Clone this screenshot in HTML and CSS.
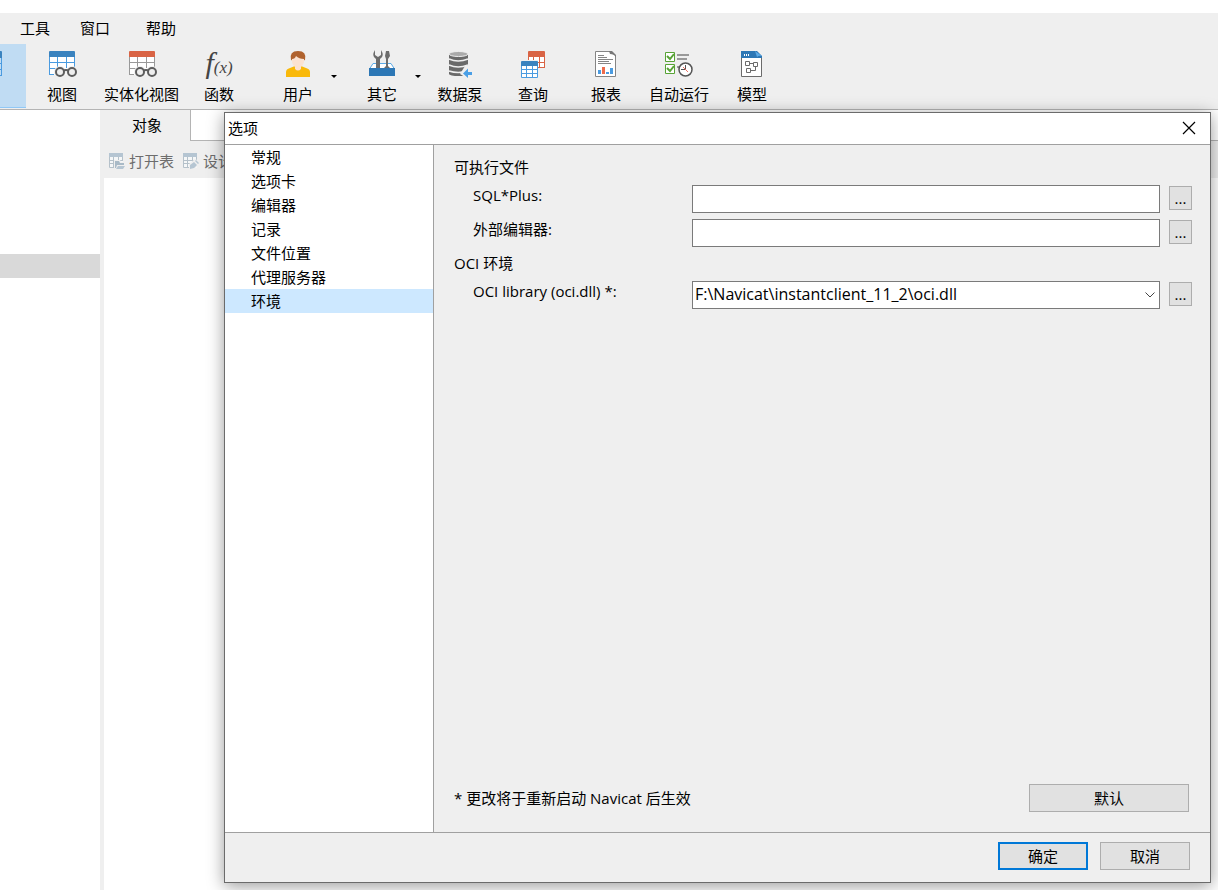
FILE: index.html
```
<!DOCTYPE html>
<html lang="zh-CN">
<head>
<meta charset="utf-8">
<title>选项</title>
<link rel="stylesheet" href="styles.css">
</head>
<body>
<div class="app">
  <nav class="menubar">
    <button class="menu">工具</button>
    <button class="menu">窗口</button>
    <button class="menu menu-help">帮助</button>
  </nav>

  <div class="toolbar">
    <button class="tool tool-active" aria-label="表">
      <svg class="edge-icon" width="2" height="26" viewBox="0 0 2 26"><path fill="#3a83bf" d="M0 0h1q1 0 1 1v6H0z"/><path fill="#4a9be0" d="M1 7h1v18H1zM0 12h1v1H0zM0 18h1v1H0zM0 24h2v1H0z"/></svg>
    </button>
    <button class="tool">
      <svg class="icon" width="28" height="28" viewBox="0 0 28 28"><path fill="#fff" d="M1 7h26v18H1z"/><path fill="none" stroke="#4a9be0" d="M1.500 7v18M1 12.500h26M1 18.500h10M1 24.500h5M9.500 7v12M18.500 7v11M26.500 7v10"/><path fill="#3a83bf" d="M1 7V2q0-1 1-1h24q1 0 1 1v5z"/><g fill="#fff" stroke="#efefef" stroke-width="4"><circle cx="12" cy="22" r="4"/><circle cx="24" cy="22" r="4"/></g><g fill="#efefef" stroke="#5d5d5d" stroke-width="2"><path d="M15 21q3-2 6 0"/><circle cx="12" cy="22" r="4"/><circle cx="24" cy="22" r="4"/></g></svg>
      <span>视图</span>
    </button>
    <button class="tool tool-wide">
      <svg class="icon" width="28" height="28" viewBox="0 0 28 28"><path fill="#fff" d="M1 7h26v18H1z"/><path fill="none" stroke="#999" d="M1.500 7v18M1 12.500h26M1 18.500h10M1 24.500h5M9.500 7v12M18.500 7v11M26.500 7v10"/><path fill="#d96445" d="M1 7V2q0-1 1-1h24q1 0 1 1v5z"/><g fill="#fff" stroke="#efefef" stroke-width="4"><circle cx="12" cy="22" r="4"/><circle cx="24" cy="22" r="4"/></g><g fill="#efefef" stroke="#5d5d5d" stroke-width="2"><path d="M15 21q3-2 6 0"/><circle cx="12" cy="22" r="4"/><circle cx="24" cy="22" r="4"/></g></svg>
      <span>实体化视图</span>
    </button>
    <button class="tool tool-fn">
      <span class="icon fx" aria-hidden="true"><i class="fx-f">f</i><i class="fx-x">(x)</i></span>
      <span>函数</span>
    </button>
    <div class="split split-first">
      <button class="tool tool-split">
        <svg class="icon" width="28" height="28" viewBox="0 0 28 28"><path fill="#f9b90a" d="M2 27v-5q0-3 4-4l5-2h6l5 2q4 1 4 4v5z"/><path fill="#fbe2d2" d="M8 7q0-5 6-5t6 5q1 7-3 10v2q-3 3-6 0v-2q-4-3-3-10z"/><path fill="#b0622e" d="M7 10Q5 1 14 1t7 9q-1 1-1-1-5 0-8-3-1 3-4 3 0 2-1 1z"/></svg>
        <span>用户</span>
      </button>
      <button class="arrow" aria-label="用户菜单"><svg width="6" height="3" viewBox="0 0 6 3"><path d="M0 0h6L3 3z"/></svg></button>
    </div>
    <div class="split">
      <button class="tool tool-split">
        <svg class="icon" width="28" height="28" viewBox="0 0 28 28"><path fill="#fff" stroke="#5caae6" d="M1.500 19l3.500-5.500h18l3.500 5.500z"/><path fill="#6b6b6b" d="M7 0Q3 6 8 9v10h4V9q5-3 1-9v5l-3 2-3-2zM18 1h3l1 5-2 3v7l2 2v1h-6v-1l2-2V9l-1-3z"/><path fill="#2d77b5" d="M1 18h26v8H1z"/></svg>
        <span>其它</span>
      </button>
      <button class="arrow" aria-label="其它菜单"><svg width="6" height="3" viewBox="0 0 6 3"><path d="M0 0h6L3 3z"/></svg></button>
    </div>
    <button class="tool">
      <svg class="icon" width="28" height="28" viewBox="0 0 28 28"><path fill="#6a6a6a" d="M3 3h19v19q-8 3-19 2z"/><ellipse cx="12.500" cy="24" rx="9.500" ry="2" fill="#6a6a6a"/><ellipse cx="12.500" cy="4" rx="9.500" ry="2.500" fill="#aaa" stroke="#efefef"/><g fill="none" stroke="#efefef"><path d="M3 9q9 4 19 0M3 15q9 4 19 0M3 21q9 3 19 0" stroke-width="1.500"/></g><path fill="#efefef" d="M14 24l5-8h9v11h-9z"/><path fill="#4a9fe6" d="M17 23.500l5-5V22h4v3h-4v3z"/></svg>
      <span>数据泵</span>
    </button>
    <button class="tool tool-mid">
      <svg class="icon" width="28" height="28" viewBox="0 0 28 28"><path fill="#fff" d="M9 5h17v13H9z"/><path fill="none" stroke="#d96445" d="M9.500 5v13M25.500 5v13M9 12.500h17M9 17.500h17M14.500 6v12M20.500 6v12"/><path fill="#d96445" d="M9 7V2q0-1 1-1h15q1 0 1 1v5z"/><path fill="#efefef" d="M1 10h18v18H1z"/><path fill="#fff" d="M2 15h17v13H2z"/><path fill="none" stroke="#4a9be0" d="M2.500 15v12.500h16V15M2 19.500h17M2 23.500h17M7.500 15v13M13.500 15v13"/><path fill="#3a83bf" d="M2 16v-4q0-1 1-1h15q1 0 1 1v4z"/></svg>
      <span>查询</span>
    </button>
    <button class="tool">
      <svg class="icon" width="28" height="28" viewBox="0 0 28 28"><path fill="#fff" stroke="#858585" d="M3.500 1.500h15l5 4v21h-20z"/><path fill="#777" d="M17 1h3l4 4v2q-2-3-6-3z"/><path fill="none" stroke="#858585" d="M6 5.500h6M6 7.500h9M6 9.500h15M6 11.500h11M6 13.500h13"/><path fill="#4a9be0" d="M6 20h3v4H6zM14 22h3v2h-3zM18 18h3v6h-3z"/><path fill="#ed6b4c" d="M10 17h3v7h-3z"/></svg>
      <span>报表</span>
    </button>
    <button class="tool tool-mid">
      <svg class="icon" width="28" height="28" viewBox="0 0 28 28"><g fill="#fff" stroke="#58a336"><path d="M.5 2.500h9v9h-9zM.5 14.500h9v9h-9z"/></g><path fill="none" stroke="#58a336" stroke-width="2" d="M2 6l3 3 4-5M2 18l3 3 4-5"/><path fill="#999" d="M12 4h12v2H12zM12 8h10v2H12zM12 16h3v2h-3z"/><circle cx="20.500" cy="19.500" r="6.500" fill="#fff" stroke="#555" stroke-width="1.500"/><path fill="none" stroke="#555" d="M20.500 15v4.500H16"/><path stroke="#ee7164" d="M18 17l5 5"/></svg>
      <span>自动运行</span>
    </button>
    <button class="tool">
      <svg class="icon" width="28" height="28" viewBox="0 0 28 28"><path fill="#fff" stroke="#6b6b6b" d="M3.500 7v19.500h20V7"/><path fill="#2d77b5" d="M3 1h16l5 5v2H3z"/><path fill="#5caae6" d="M17 1l7 5q-3-1-5 1z"/><path fill="#fff" d="M6 4h1v2H6zM8 4h1v2H8zM10 4h1v2h-1z"/><path fill="none" stroke="#6b6b6b" d="M7.500 11.500h4v4h-4zM8.500 18.500h4v4h-4zM15.500 12.500h4v4h-4zM12 13.500h3M17.500 17v3.500h-5"/></svg>
      <span>模型</span>
    </button>
  </div>

  <div class="workspace">
    <aside class="tree"><div class="tree-selected"></div></aside>
    <main class="content">
      <div class="tabs"><button class="tab">对象</button></div>
      <div class="actions">
        <button class="action"><svg width="16" height="16" viewBox="0 0 16 16"><path fill="#f5f7f8" d="M0 4h14v11H0z"/><path fill="none" stroke="#b5c1ca" d="M.5 4v10.500H6M0 7.500h14M0 10.500h6M4.500 4v11M9.500 4v4M13.500 4v4"/><path fill="#b5c5d2" d="M0 0h14v4H0z"/><path fill="#efefef" d="M5 7h6l1 2h4v7H5z"/><path fill="#a9bac7" d="M6 8h4l1 2h4v2H8l-1 3H6z"/><path fill="#b5c5d2" d="M9 13h7l-2 3H7z"/></svg>打开表</button>
        <button class="action"><svg width="16" height="16" viewBox="0 0 16 16"><path fill="#f5f7f8" d="M0 4h14v11H0z"/><path fill="none" stroke="#b5c1ca" d="M.5 4v10.500H7M0 7.500h14M0 10.500h8M4.500 4v11M9.500 4v6M13.500 4v4"/><path fill="#b5c5d2" d="M0 0h14v4H0z"/><path fill="#efefef" d="M6 16v-5l6-5 4 2v4l-5 4z"/><path fill="#b5c5d2" d="M7 16v-4l4-3 3 3-3 3zM12 8l1-1 3 3-1 1z"/></svg>设计表</button>
      </div>
    </main>
  </div>

  <section class="dialog" role="dialog" aria-labelledby="dialog-title">
    <header class="titlebar">
      <h1 class="title" id="dialog-title">选项</h1>
      <button class="close" aria-label="关闭"><svg width="12" height="12" viewBox="0 0 12 12"><path stroke="#000" stroke-width="1.200" d="M0 0l12 12M12 0L0 12"/></svg></button>
    </header>
    <div class="dialog-body">
      <nav class="sections">
        <button class="section">常规</button>
        <button class="section">选项卡</button>
        <button class="section">编辑器</button>
        <button class="section">记录</button>
        <button class="section">文件位置</button>
        <button class="section">代理服务器</button>
        <button class="section section-current" aria-current="page">环境</button>
      </nav>
      <div class="panel">
        <div class="group">
          <h2 class="group-title">可执行文件</h2>
          <div class="row">
            <label class="label" for="sqlplus">SQL*Plus:</label>
            <input class="field" id="sqlplus" type="text">
            <button class="browse" aria-label="浏览 SQL*Plus">...</button>
          </div>
          <div class="row">
            <label class="label" for="editor">外部编辑器:</label>
            <input class="field" id="editor" type="text">
            <button class="browse" aria-label="浏览外部编辑器">...</button>
          </div>
        </div>
        <div class="group">
          <h2 class="group-title">OCI 环境</h2>
          <div class="row">
            <label class="label" for="oci">OCI library (oci.dll) *:</label>
            <div class="combo">
              <select class="field" id="oci"><option>F:\Navicat\instantclient_11_2\oci.dll</option></select>
              <svg class="chevron" width="10" height="6" viewBox="0 0 10 6"><path fill="none" stroke="#444" d="M.5 .5L5 5 9.500 .5"/></svg>
            </div>
            <button class="browse" aria-label="浏览 OCI library">...</button>
          </div>
        </div>
        <div class="note">
          <span>* 更改将于重新启动 Navicat 后生效</span>
          <button class="btn btn-wide">默认</button>
        </div>
      </div>
    </div>
    <footer class="footer">
      <button class="btn btn-primary">确定</button>
      <button class="btn">取消</button>
    </footer>
  </section>
</div>
</body>
</html>
```
FILE: styles.css
```
* { box-sizing: border-box; }

body {
  margin: 0;
  background: #fff;
  color: #000;
  font: 15px/20px "Open Sans", "Noto Sans CJK SC", sans-serif;
}

button, input, select { font: inherit; color: inherit; }

button {
  margin: 0;
  padding: 0;
  border: 0;
  background: none;
}

svg { display: block; flex: none; overflow: visible; }

.app {
  position: relative;
  display: flex;
  flex-direction: column;
  min-height: 100vh;
  padding-top: 13px;
}

.menubar {
  display: flex;
  gap: 30px;
  height: 31px;
  padding: 0 20px 2px;
  background: #efefef;
}

.menu-help { margin-left: 6px; }

.toolbar {
  display: flex;
  height: 66px;
  border-bottom: 1px solid #b4b4b4;
  background: #efefef;
}

.tool {
  display: flex;
  flex-direction: column;
  align-items: center;
  gap: 6px;
  width: 72px;
  height: 64px;
  padding-top: 6px;
  white-space: nowrap;
}

.tool-active {
  align-items: flex-start;
  width: 26px;
  border-bottom: 1px solid #90c8f6;
  background: #c0dcf3;
}

.edge-icon { margin-top: 1px; }
.tool-wide { width: 87px; }
.tool-mid { width: 74px; }
.tool-fn { width: 68px; }
.tool-split { width: 60px; }
.icon { height: 28px; }

.fx {
  display: flex;
  align-items: baseline;
  color: #444;
  font-family: "Liberation Serif", serif;
  line-height: 26px;
}

.fx-f { font-size: 30px; }
.fx-x { font-size: 17px; }

.split { display: flex; margin-left: 12px; }
.split-first { margin-left: 15px; }

.arrow {
  display: flex;
  align-items: center;
  justify-content: center;
  width: 12px;
  height: 64px;
}

.workspace {
  display: flex;
  flex: 1;
  background: #efefef;
  gap: 4px;
}

.tree {
  width: 100px;
  padding-top: 144px;
  background: #fff;
}

.tree-selected { height: 24px; background: #d9d9d9; }

.content { flex: 1; background: #fff; }

.tabs {
  display: flex;
  height: 31px;
  background: linear-gradient(#b4b4b4, #b4b4b4) bottom / 100% 1px no-repeat;
}

.tab {
  width: 87px;
  padding-bottom: 2px;
  border-right: 1px solid #b4b4b4;
  background: #efefef;
}

.actions {
  display: flex;
  gap: 9px;
  height: 37px;
  padding: 2px 0 0 5px;
  background: #efefef;
}

.action {
  display: flex;
  align-items: center;
  gap: 4px;
  color: #6d6d6d;
}

.dialog {
  position: absolute;
  inset: 112px 7px 7px 224px;
  display: flex;
  flex-direction: column;
  border: 1px solid #6b6b6b;
  background: #efefef;
  box-shadow: 0 3px 16px rgba(0, 0, 0, .4);
}

.titlebar {
  display: flex;
  align-items: center;
  justify-content: space-between;
  height: 32px;
  padding: 0 15px 2px 3px;
  border-bottom: 1px solid #a0a0a0;
  background: #fff;
}

.title, .group-title { margin: 0; font: inherit; }

.dialog-body { display: flex; flex: 1; }

.sections {
  display: flex;
  flex-direction: column;
  width: 209px;
  border-right: 1px solid #a0a0a0;
  background: #fff;
}

.section {
  height: 24px;
  padding-left: 26px;
  text-align: left;
}

.section-current { background: #cde8ff; }

.panel {
  display: flex;
  flex: 1;
  flex-direction: column;
  gap: 6px;
  padding: 12px 18px 20px 20px;
}

.group { display: flex; flex-direction: column; gap: 6px; }
.group-title { margin-bottom: 2px; }

.row {
  display: flex;
  align-items: flex-start;
  gap: 9px;
  padding-left: 19px;
}

.label { width: 210px; }

.field {
  flex: 1;
  min-width: 0;
  height: 28px;
  padding: 0 2px 2px;
  border: 1px solid #7a7a7a;
  border-radius: 0;
  background: #fff;
  font-size: 16px;
  appearance: none;
}

.combo { position: relative; display: flex; flex: 1; }

.chevron {
  position: absolute;
  top: 11px;
  right: 5px;
  pointer-events: none;
}

.browse {
  width: 23px;
  height: 24px;
  margin-top: 1px;
  border: 1px solid #adadad;
  background: #e1e1e1;
}

.note {
  display: flex;
  align-items: center;
  justify-content: space-between;
  margin-top: auto;
  padding-right: 3px;
}

.btn {
  width: 90px;
  height: 28px;
  border: 1px solid #adadad;
  background: #e1e1e1;
}

.btn-wide { width: 160px; }
.btn-primary { border: 2px solid #0078d7; }

.footer {
  display: flex;
  justify-content: flex-end;
  gap: 12px;
  height: 50px;
  padding: 9px 20px;
  border-top: 1px solid #a0a0a0;
}
```
